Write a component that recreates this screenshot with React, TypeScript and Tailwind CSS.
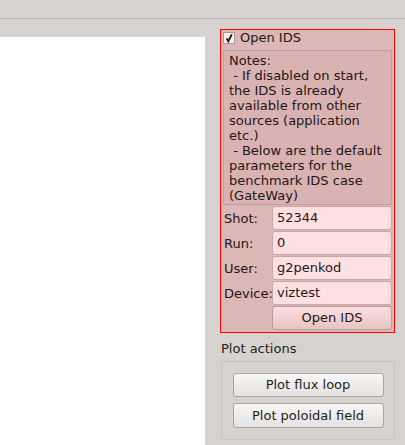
const fields = [
  { label: 'Shot:', value: '52344' },
  { label: 'Run:', value: '0' },
  { label: 'User:', value: 'g2penkod' },
  { label: 'Device:', value: 'viztest' },
]

const notes = [
  'Notes:',
  ' - If disabled on start,',
  'the IDS is already',
  'available from other',
  'sources (application',
  'etc.)',
  ' - Below are the default',
  'parameters for the',
  'benchmark IDS case',
  '(GateWay)',
]

const App = () => {
  return (
    <div className="w-[405px] h-[445px] overflow-hidden bg-[#d6d2cf] text-[13px] text-[#1f1a1a] font-['DejaVu_Sans',sans-serif] flex flex-col">
      {/* top strip */}
      <div className="h-[19px] border-b border-[#bdb9b5] shrink-0" />

      <div className="flex flex-1 min-h-0">
        {/* canvas area */}
        <div className="w-[205px] pt-[18px] flex flex-col">
          <div className="flex-1 bg-white" />
        </div>

        {/* side panel */}
        <div className="ml-[15px] w-[175px] pt-[10px] flex flex-col">
          <div className="border border-[#ff0000] bg-[#dbb7b5] text-[#241616] px-[1px] pt-[1px] pb-[2px] flex flex-col">
            <label className="flex items-center h-[14px] mb-[5px]">
              <span className="ml-[1px] w-[12px] h-[12px] bg-[#fcecec] border border-[#b09494] flex items-center justify-center">
                <svg viewBox="0 0 10 10" className="w-[10px] h-[10px]">
                  <path d="M2.6 5.4 L4.3 8.4 L7.8 1.4" fill="none" stroke="#140c0c" strokeWidth="1.8" strokeLinecap="butt" strokeLinejoin="miter" />
                </svg>
              </span>
              <span className="ml-[5px] leading-[14px]">Open IDS</span>
            </label>

            <div className="mx-[1px] border border-[#bf9f9d] bg-[#d9b3b1] pl-[5px] pt-[2px] pb-[1px] leading-[15px] whitespace-pre">
              {notes.map((line) => (
                <div key={line}>{line}</div>
              ))}
            </div>

            <div className="mt-[1px] flex flex-col gap-[1px]">
              {fields.map((f) => (
                <div key={f.label} className="flex items-center h-[24px]">
                  <span className="w-[50px] pl-[2px] leading-[15px]">{f.label}</span>
                  <div className="w-[120px] h-[24px] rounded-[3px] border border-[#c7a6a6] bg-[#ffe0e0] pl-[4px] flex items-center">
                    {f.value}
                  </div>
                </div>
              ))}
              <div className="flex h-[24px]">
                <div className="w-[50px]" />
                <button className="w-[120px] h-[24px] rounded-[3px] border border-[#b99999] bg-gradient-to-b from-[#f9dfdf] to-[#e8c4c4] text-[13px] text-[#241616]">
                  Open IDS
                </button>
              </div>
            </div>
          </div>

          <div className="mt-[8px] pl-[1px] leading-[15px] text-[#1e1e1e]">Plot actions</div>

          <div className="mt-[5px] ml-[1px] w-[174px] h-[79px] border border-[#c6c2be] rounded-[2px] flex flex-col items-center pt-[11px] gap-[6px]">
            <button className="w-[151px] h-[24px] rounded-[3px] border border-[#a9a6a3] bg-gradient-to-b from-[#f8f7f6] to-[#e4e2e0] text-[13px] text-[#1e1e1e]">
              Plot flux loop
            </button>
            <button className="w-[151px] h-[25px] rounded-[3px] border border-[#a9a6a3] bg-gradient-to-b from-[#f8f7f6] to-[#e4e2e0] text-[13px] text-[#1e1e1e]">
              Plot poloidal field
            </button>
          </div>
        </div>
      </div>
    </div>
  )
}

export default App
